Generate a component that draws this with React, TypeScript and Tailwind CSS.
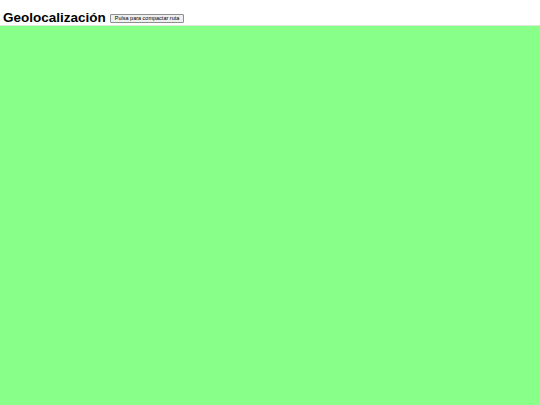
export default function App() {
  return (
    <div className="flex h-[405px] w-[540px] flex-col bg-white font-['Liberation_Sans',Arial,sans-serif]">
      <div className="flex h-[25px] shrink-0 items-end pl-[3px]">
        <h1 className="text-[13.5px] leading-[15px] font-bold text-black">Geolocalización</h1>
        <button className="mb-[2px] ml-[4px] h-[9px] rounded-[1px] border border-[#8f8f8f] bg-[#efefef] px-[4px] text-[5.5px] leading-[7px] text-black">
          Pulsa para compactar ruta
        </button>
      </div>
      <div className="flex-1 border-t border-[#d8ead8] bg-[#88ff88]" />
    </div>
  )
}
